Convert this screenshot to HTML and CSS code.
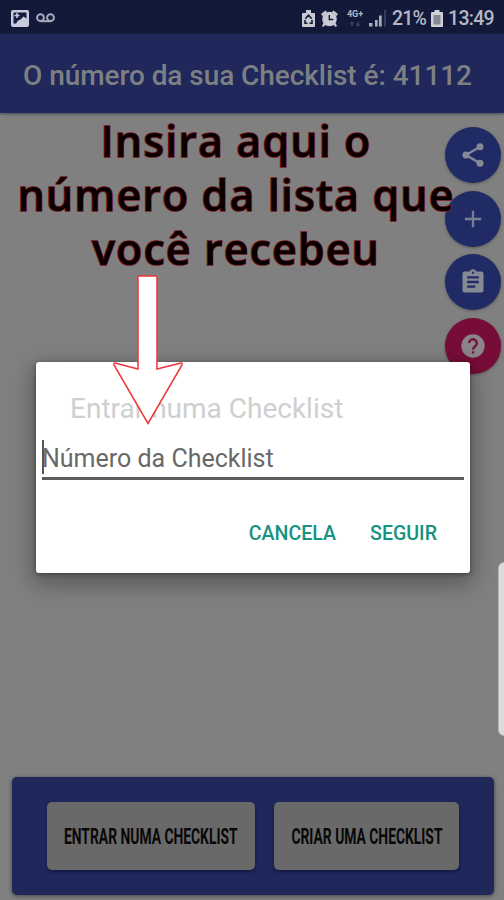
FILE: index.html
```html
<!DOCTYPE html>
<html lang="pt">
<head>
<meta charset="utf-8">
<title>Checklist</title>
<link rel="stylesheet" href="styles.css">
</head>
<body>
<div class="screen">
  <div class="status">
    <svg class="picture" width="18" height="17" viewBox="0 0 18 17"><rect width="18" height="17" rx="2" fill="#c9cada"/><path d="M2.500 2.500h13v6l-3-2-3 3-2.500 1-2 3H2.500z" fill="#151b3e"/><path d="M6 3v5M3.500 5.500h5" stroke="#c9cada" stroke-width="1.600"/></svg>
    <svg class="voicemail" width="19" height="10" viewBox="0 0 19 10" fill="none" stroke="#a6a9bb" stroke-width="2"><circle cx="4.500" cy="4.700" r="3.400"/><circle cx="14.500" cy="4.700" r="3.400"/><path d="M4.500 8.200h10"/></svg>
    <div class="indicators">
      <svg width="13" height="17" viewBox="0 0 13 17"><path d="M1 3h3V0h5v3h3q1 0 1 1v12q0 1-1 1H1q-1 0-1-1V4q0-1 1-1z" fill="#c8c9d2"/><path d="M3.300 8.800L6.500 5.300l3.200 3.500M3 10v3.300h2.500M10 10v3.300H7.500" fill="none" stroke="#151b3e" stroke-width="1.600"/></svg>
      <svg class="alarm" width="17" height="17" viewBox="0 0 17 17"><g fill="#c8c9d2"><path d="M0 4L4.500.500 6 2 1.500 6zM17 4L12.500.500 11 2l4.500 4zM2.500 13l2 1.500L2.500 17 1 16zM14.500 13l-2 1.500 2 2.500 1.500-1z"/><circle cx="8.500" cy="9" r="7.300"/></g><path d="M8.300 5v4.500h4" fill="none" stroke="#151b3e" stroke-width="1.400"/></svg>
      <div class="network"><span>4G+</span><svg width="10" height="6" viewBox="0 0 10 6"><path d="M2 5V1M.5 2.500L2 1l1.500 1.500M8 1v4M6.500 3.500L8 5l1.500-1.500" fill="none" stroke="#535873"/></svg></div>
      <svg class="signal" width="18" height="17" viewBox="0 0 18 17"><path d="M0 13h3.500v3.500H0zM6 10h2.700v6.500H6zM10 5.500h2.700v11H10z" fill="#a9acbd"/><path d="M15 0h2v16.500h-2z" fill="#343a5c"/></svg>
      <span class="percent">21%</span>
      <svg class="battery" width="12" height="17" viewBox="0 0 12 17"><path d="M1 2h2.500V0h5v2H11q1 0 1 1v13q0 1-1 1H1q-1 0-1-1V3q0-1 1-1z" fill="#d0d1d7"/><path d="M2.500 5h7v9.500h-7z" fill="#858896"/></svg>
      <span class="clock">13:49</span>
    </div>
  </div>
  <header class="header"><h1 class="title">O número da sua Checklist é: 41112</h1></header>
  <main class="content">
    <p class="hint"><span class="line">Insira aqui o</span><span class="line">número da lista que</span><span class="line">você recebeu</span></p>
    <nav class="actions">
      <button class="fab"><svg width="28" height="28" viewBox="0 0 24 24"><path d="M18 5L6 12l12 7" fill="none" stroke="#858994" stroke-width="2"/><g fill="#858994"><circle cx="18" cy="5" r="3"/><circle cx="6" cy="12" r="3"/><circle cx="18" cy="19" r="3"/></g></svg></button>
      <button class="fab"><svg width="28" height="28" viewBox="0 0 24 24"><path d="M12 5v14M5 12h14" stroke="#777d93" stroke-width="2"/></svg></button>
      <button class="fab"><svg width="28" height="28" viewBox="0 0 24 24"><path fill="#858994" fill-rule="evenodd" d="M19 3h-4.200a3 3 0 0 0-5.600 0H5a2 2 0 0 0-2 2v14a2 2 0 0 0 2 2h14a2 2 0 0 0 2-2V5a2 2 0 0 0-2-2zM12 3a1 1 0 1 1 0 2 1 1 0 0 1 0-2zM7 7h10v2H7zm0 4h10v2H7zm0 4h7v2H7z"/></svg></button>
      <button class="fab help"><svg width="28" height="28" viewBox="0 0 24 24"><circle cx="12" cy="12" r="10" fill="#8b8589"/><path d="M8.700 9.500a3.300 3.300 0 1 1 5.200 2.700c-1.200.8-1.900 1.300-1.900 3M12 16.500v2" fill="none" stroke="#78103a" stroke-width="2"/></svg></button>
    </nav>
    <footer class="panel">
      <button class="choice join"><span>ENTRAR NUMA CHECKLIST</span></button>
      <button class="choice create"><span>CRIAR UMA CHECKLIST</span></button>
    </footer>
  </main>
  <div class="edge-handle"></div>
  <section class="dialog" role="dialog">
    <h2 class="dialog-title">Entrar numa Checklist</h2>
    <div class="field"><span>Número da Checklist</span></div>
    <div class="dialog-actions"><button class="cancel">CANCELA</button><button class="next">SEGUIR</button></div>
  </section>
  <svg class="arrow" width="74" height="154" viewBox="0 0 74 154"><path d="M28 2H45Q46 2 46 3V95L70 89Q71.500 89 71 91L37 149.500 3 91Q2.500 89 4 89L27 95V3Q27 2 28 2z" fill="#fff" stroke="#ed3438" stroke-width="1.500"/></svg>
</div>
</body>
</html>
```
FILE: styles.css
```css
* { box-sizing: border-box; }
body { margin: 0; font-family: Roboto, "Liberation Sans", sans-serif; }
button { border: 0; padding: 0; font-family: inherit; }
h1, h2, p { margin: 0; }
svg { display: block; flex: none; }
.screen { position: relative; width: 504px; height: 900px; display: flex; flex-direction: column; overflow: hidden; background: #808080; }
.status { height: 34px; flex: none; display: flex; align-items: center; padding: 2px 10px 0 11px; background: #131a39; color: #b5b7c4; }
.voicemail { margin-left: 7px; }
.indicators { display: flex; align-items: center; margin-left: auto; }
.alarm { margin-left: 6px; }
.network { width: 18px; margin-left: 8px; display: flex; flex-direction: column; align-items: center; gap: 2px; font-size: 9px; line-height: 9px; font-weight: 700; }
.signal { margin-left: 5px; }
.percent { width: 34px; margin-left: 5px; padding-top: 2px; font-size: 19.5px; line-height: 24px; font-weight: 500; letter-spacing: -0.8px; white-space: nowrap; }
.battery { margin-left: 5px; }
.clock { width: 46px; margin-left: 5px; padding-top: 2px; font-size: 19.5px; line-height: 24px; font-weight: 500; letter-spacing: -0.7px; white-space: nowrap; }
.header { height: 79px; flex: none; display: flex; align-items: center; padding: 4px 0 0 23px; background: #1f275b; box-shadow: 0 1px 3px #444a60; z-index: 1; }
.title { font-size: 28px; line-height: 34px; font-weight: 500; color: #7d8083; white-space: nowrap; letter-spacing: -0.06px; }
.content { flex: 1; display: flex; flex-direction: column; position: relative; }
.hint { position: relative; z-index: 2; display: flex; flex-direction: column; align-items: center; width: 472px; padding-top: 1px; font: 600 43px/54px "Open Sans", sans-serif; letter-spacing: 1.1px; color: #080000; -webkit-text-stroke: 1.6px #79141b; paint-order: stroke fill; }
.line { white-space: nowrap; }
.actions { position: absolute; top: 14px; right: 3px; display: flex; flex-direction: column; gap: 7.5px; }
.fab { width: 56px; height: 56px; border-radius: 50%; background: #202b66; display: grid; place-items: center; box-shadow: 0 1px 3px #555; }
.help { background: #780c38; }
.panel { width: 482px; height: 118px; margin: auto 0 5px 12px; padding: 25px 35px; display: flex; gap: 19px; align-items: flex-start; background: #1f275b; border-radius: 5px; box-shadow: 0 1px 4px #414141; }
.choice { height: 68px; flex: none; border-radius: 5px; background: #696969; color: #080808; font-size: 22px; font-weight: 700; display: flex; align-items: center; justify-content: center; box-shadow: 0 2px 3px #151b43; }
.choice span { flex: none; white-space: nowrap; transform: scaleX(.63); }
.join { width: 208px; }
.create { width: 185px; }
.edge-handle { position: absolute; left: 498px; top: 562px; width: 12px; height: 174px; border-radius: 6px; background: #dcdcdc; border: 1px solid #b4b4b4; }
.dialog { position: absolute; z-index: 3; left: 36px; top: 362px; width: 434px; height: 211px; padding: 30px 6px 0; background: #fff; border-radius: 3px; box-shadow: 0 8px 22px 4px rgba(0,0,0,.3), 0 1px 4px rgba(0,0,0,.4); }
.dialog-title { padding-left: 28px; font-size: 28px; line-height: 34px; font-weight: 400; color: #cfcfcf; }
.field { height: 54px; border-bottom: 3px solid #5c5c5c; display: flex; align-items: center; padding-top: 14px; color: #686868; font-size: 25px; line-height: 32px; position: relative; }
.field::before { content: ""; position: absolute; left: 0; top: 14px; width: 2px; height: 34px; background: #555; }
.dialog-actions { display: flex; justify-content: flex-end; gap: 34px; padding: 42px 27px 0 0; }
.dialog-actions button { background: transparent; color: #16937f; font-size: 19.6px; line-height: 24px; font-weight: 500; }
.arrow { position: absolute; z-index: 4; left: 111px; top: 274px; }
```
